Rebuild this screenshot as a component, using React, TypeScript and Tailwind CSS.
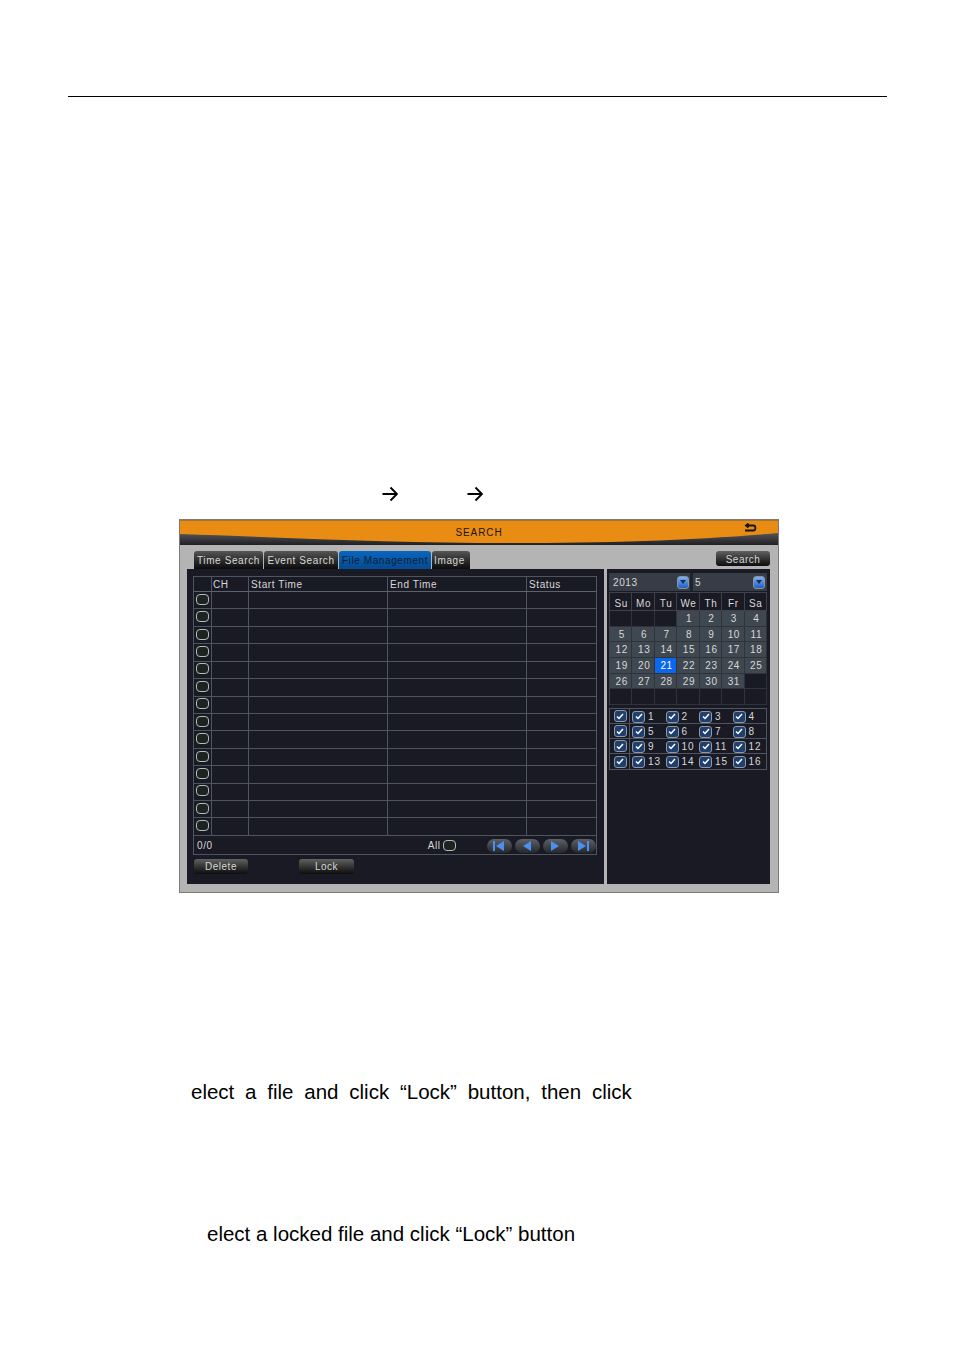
import React from 'react';

const ROWS = Array.from({ length: 14 }, (_, i) => i);
const HEADS = ['Su', 'Mo', 'Tu', 'We', 'Th', 'Fr', 'Sa'];
const DAYS = [
  '', '', '', '1', '2', '3', '4',
  '5', '6', '7', '8', '9', '10', '11',
  '12', '13', '14', '15', '16', '17', '18',
  '19', '20', '21', '22', '23', '24', '25',
  '26', '27', '28', '29', '30', '31', '',
  '', '', '', '', '', '', '',
];
const CHANNELS = [
  ['1', '2', '3', '4'],
  ['5', '6', '7', '8'],
  ['9', '10', '11', '12'],
  ['13', '14', '15', '16'],
];
const TABS = [
  { label: 'Time Search', w: 'w-[69px]', on: false },
  { label: 'Event Search', w: 'w-[74px]', on: false },
  { label: 'File Management', w: 'w-[92px]', on: true },
  { label: 'Image', w: 'w-[38px] pr-[3px]', on: false },
];

const Arrow = () => (
  <svg width="16" height="16" viewBox="0 0 16 16" fill="none" stroke="#000" strokeWidth="1.9">
    <path d="M0.5 8H14.5M8.5 1.5L15 8L8.5 14.5" />
  </svg>
);

const RoundBox = () => (
  <span className="block w-[13px] h-[11px] rounded-[4px] border border-[#b4bcb4] bg-[#1c2320]" />
);

const Check = () => (
  <span className="flex items-center justify-center w-[13px] h-[12px] rounded-[3px] border border-[#8f99a6] bg-[#1f3f6e]">
    <svg width="8" height="7" viewBox="0 0 8 7" fill="none" stroke="#fff" strokeWidth="1.5">
      <path d="M1 3.5L3 5.5L7 1" />
    </svg>
  </span>
);

const DropBtn = () => (
  <span className="flex items-center justify-center w-[12px] h-[13px] rounded-[3px] border border-[#8a94a0] bg-gradient-to-b from-[#7fb0ee] to-[#1f5fc0]">
    <svg width="6" height="4" viewBox="0 0 6 4" fill="#12305f"><path d="M0 0H6L3 4Z" /></svg>
  </span>
);

const DarkBtn = ({ label, w }: { label: string; w: string }) => (
  <div className={`${w} h-[15px] pt-[1px] rounded-[3px] bg-gradient-to-b from-[#626262] to-[#0e0e0e] flex items-center justify-center text-[#d6d6d6] text-[10px] tracking-[0.5px]`}>
    {label}
  </div>
);

const NavBtn = ({ d }: { d: string }) => (
  <div className="w-[25px] h-[14px] rounded-[8px] bg-gradient-to-b from-[#5d6066] to-[#26282c] flex items-center justify-center">
    <svg width="14" height="10" viewBox="0 0 14 10" fill="#4a90f0"><path d={d} /></svg>
  </div>
);

export default function App() {
  return (
    <div className="w-[954px] h-[1354px] bg-white overflow-hidden text-black" style={{ fontFamily: '"Liberation Sans", Arial, sans-serif' }}>
      <div className="ml-[68px] mt-[96px] w-[819px] h-px bg-black" />

      <div className="mt-[389px] h-[16px] flex">
        <div className="ml-[382px]"><Arrow /></div>
        <div className="ml-[69px]"><Arrow /></div>
      </div>

      {/* DVR window */}
      <div className="mt-[17px] ml-[179px] w-[600px] h-[374px] border border-[#7a7a7a] bg-[#b4b4b4] text-[10px] tracking-[0.6px] text-[#d8d8d8]">
        <div className="relative h-[25px] bg-[#e88c14]">
          <svg className="absolute left-0 top-0" width="598" height="25" viewBox="0 0 598 25" preserveAspectRatio="none">
            <defs>
              <linearGradient id="swoosh" x1="0" y1="0" x2="0" y2="1">
                <stop offset="0" stopColor="#55555a" />
                <stop offset="1" stopColor="#202024" />
              </linearGradient>
            </defs>
            <path d="M0 14C120 18 220 23 330 23C430 23 520 20 598 13V25H0Z" fill="url(#swoosh)" />
            <path d="M0 0H598V1H0Z" fill="#a87430" />
          </svg>
          <div className="relative h-[24px] flex items-center justify-center text-[#1c1408] pt-[1px] tracking-[0.9px]">SEARCH</div>
          <svg className="absolute right-[21px] top-[3px]" width="13" height="10" viewBox="0 0 13 10" fill="none" stroke="#141414" strokeWidth="1.8">
            <path d="M3 2.5H9.5C12 2.5 12 7.5 9.5 7.5H1M4.5 0.5L2 2.5L4.5 4.5" />
          </svg>
        </div>

        <div className="flex items-end h-[24px] pl-[14px] pr-[8px]">
          <div className="flex gap-px">
            {TABS.map(t => (
              <div
                key={t.label}
                className={`${t.w} h-[18px] pt-[1px] rounded-t-[3px] flex items-center justify-center text-[10px] ${t.on ? 'bg-gradient-to-b from-[#0a66c0] to-[#044a90] text-[#0c1c30]' : 'bg-gradient-to-b from-[#565656] to-[#0c0c0c] text-[#d8d8d8]'}`}
              >
                {t.label}
              </div>
            ))}
          </div>
          <div className="ml-auto mb-[3px]"><DarkBtn label="Search" w="w-[54px]" /></div>
        </div>

        <div className="flex pl-[7px]">
          {/* File list */}
          <div className="w-[417px] h-[315px] bg-[#191a24] pl-[6px] pt-[7px]">
            <div className="w-[404px] border border-[#4f5560]">
              <div className="flex h-[15px] border-b border-[#5d636c]">
                <div className="w-[18px] border-r border-[#4f5560]" />
                <div className="w-[37px] border-r border-[#4f5560] pl-[1px]">CH</div>
                <div className="w-[139px] border-r border-[#4f5560] pl-[2px]">Start Time</div>
                <div className="w-[139px] border-r border-[#4f5560] pl-[2px]">End Time</div>
                <div className="flex-1 pl-[2px]">Status</div>
              </div>
              {ROWS.map(r => (
                <div key={r} className="flex h-[17.43px] border-b border-[#4f5560]">
                  <div className="w-[18px] border-r border-[#4f5560] flex items-center justify-center pb-[2px]"><RoundBox /></div>
                  <div className="w-[37px] border-r border-[#4f5560]" />
                  <div className="w-[139px] border-r border-[#4f5560]" />
                  <div className="w-[139px] border-r border-[#4f5560]" />
                  <div className="flex-1" />
                </div>
              ))}
              <div className="flex items-center h-[18px] pl-[3px] pt-[2px]">
                <span>0/0</span>
                <span className="ml-[215px]">All</span>
                <span className="ml-[2px]"><RoundBox /></span>
                <div className="ml-[31px] flex gap-[3px]">
                  <NavBtn d="M1 0H3V10H1ZM12 0V10L4 5Z" />
                  <NavBtn d="M11 0V10L3 5Z" />
                  <NavBtn d="M3 0V10L11 5Z" />
                  <NavBtn d="M2 0V10L10 5ZM11 0H13V10H11Z" />
                </div>
              </div>
            </div>
            <div className="flex mt-[4px] ml-[1px] gap-[51px] text-[#d6d6d6]">
              <DarkBtn label="Delete" w="w-[54px]" />
              <DarkBtn label="Lock" w="w-[55px]" />
            </div>
          </div>

          {/* Calendar */}
          <div className="ml-[3px] w-[163px] h-[315px] bg-[#191a24] pl-[2px] pt-[4px]">
            <div className="w-[158px] flex gap-[3px] h-[18px] bg-[#1f242c]">
              <div className="w-[81px] bg-[#363d47] flex items-center justify-between pl-[4px] pr-[1px]">2013<DropBtn /></div>
              <div className="w-[74px] bg-[#363d47] flex items-center justify-between pl-[2px] pr-[2px]">5<DropBtn /></div>
            </div>
            <div className="w-[158px] grid grid-cols-7 border-l border-t border-[#3d424b] mt-[1px]">
              {HEADS.map(h => (
                <div key={h} className="h-[18px] pt-[3px] pl-[1px] flex items-center justify-center border-r border-b border-[#3d424b]">{h}</div>
              ))}
              {DAYS.map((d, i) => (
                <div
                  key={i}
                  className={`h-[15.7px] pl-[2px] flex items-center justify-center border-r border-b border-[#2f333b] ${d === '21' ? 'bg-[#0a68f0] text-white' : d ? 'bg-[#3f4750]' : ''}`}
                >
                  {d}
                </div>
              ))}
            </div>
            <div className="w-[158px] mt-[3px] border border-[#4f5560]">
              {CHANNELS.map((row, i) => (
                <div key={i} className={`flex h-[15px] ${i < 3 ? 'border-b border-[#4f5560]' : ''}`}>
                  <div className="w-[20px] pl-[1px] border-r border-[#4f5560] flex items-center justify-center"><Check /></div>
                  <div className="flex-1 grid grid-cols-4 pl-[2px] tracking-[1px]">
                    {row.map(c => (
                      <div key={c} className="flex items-center gap-[3px]"><Check />{c}</div>
                    ))}
                  </div>
                </div>
              ))}
            </div>
          </div>
        </div>
      </div>

      <div className="mt-[187px] ml-[191px] text-[20.5px] leading-[24px] whitespace-nowrap [word-spacing:5.1px]">elect a file and click “Lock” button, then click</div>
      <div className="mt-[118px] ml-[207px] text-[20.5px] leading-[24px] whitespace-nowrap">elect a locked file and click “Lock” button</div>
    </div>
  );
}
